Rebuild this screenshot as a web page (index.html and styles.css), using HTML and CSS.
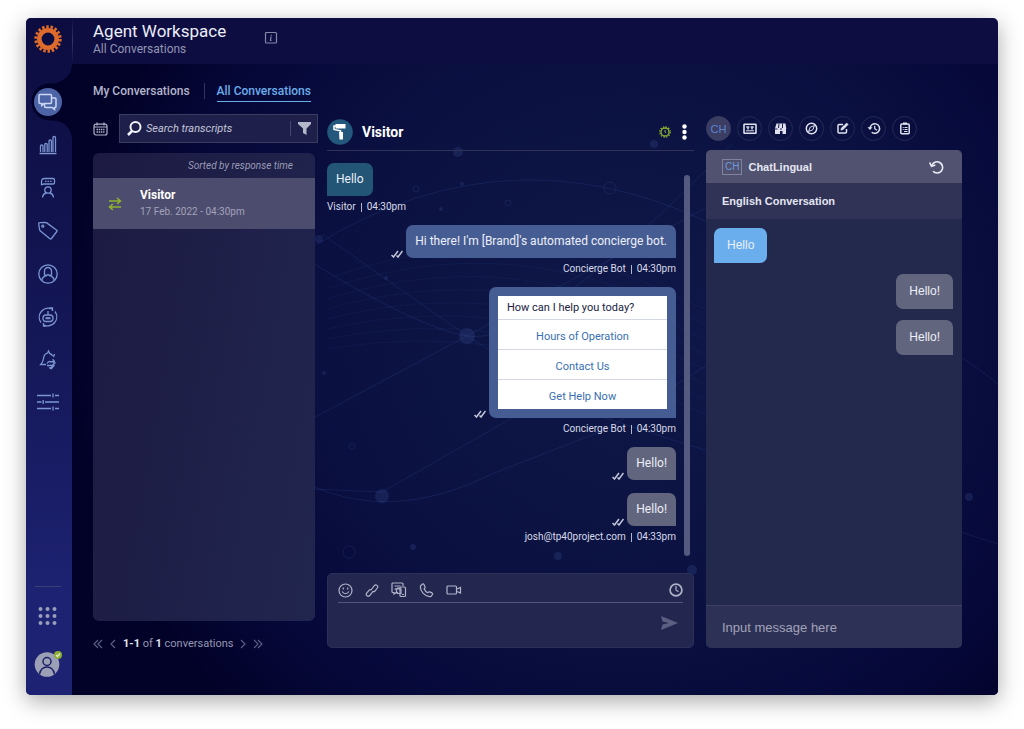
FILE: index.html
```html
<!DOCTYPE html>
<html lang="en">
<head>
<meta charset="utf-8">
<title>Agent Workspace</title>
<link rel="stylesheet" href="styles.css">
</head>
<body>
<div class="app">
  <aside class="sidebar">
    <div class="brand">
      <svg width="28" height="28" viewBox="-14 -14 28 28" fill="none" stroke="#de6b2c"><circle r="8.700" stroke-width="4.600"/><circle r="12.200" stroke-width="3" stroke-dasharray="2.500 1.758"/></svg>
    </div>
    <nav class="nav">
      <svg class="notch" width="46" height="76" viewBox="0 0 46 76"><path d="M46 0C46 11 38 18 27 19.500C14 18 5.500 27 5.500 38C5.500 49 14 57 27 56.500C38 57 46 64 46 76Z" fill="#020229"/></svg>
      <button class="nav-btn active" aria-label="Conversations"><svg width="22" height="20" viewBox="0 0 22 20"><path d="M3 2.500h10.500q1 0 1 1v7q0 1-1 1H7L4.800 13.500v-2H3q-1 0-1-1v-7q0-1 1-1Z"/><path d="M14.500 6H18q1 0 1 1v7.500q0 1-1 1h-.5v2l-2.500-2H9q-1.500 0-1.500-1.500v-2.500"/></svg></button>
      <button class="nav-btn" aria-label="Reports"><svg width="20" height="20" viewBox="0 0 20 20"><path d="M2.500 17v-6q0-1 1.200-1T5 11v6M6.800 17V9.500q0-1 1.200-1t1.200 1V17M11 17V6q0-1 1.200-1t1.200 1v11M15 17V2.500q0-1 1.200-1t1.300 1V17M1.500 18.500h17"/></svg></button>
      <button class="nav-btn" aria-label="Bots and agents"><svg width="20" height="22" viewBox="0 0 20 22"><path d="M6.500 1.500h8.500q1.500 0 1.500 1.500v2.500q0 1.500-1.500 1.500H6L3.500 7.700V4.500q0-3 3-3Z"/><path d="M7 4.300h7" stroke-dasharray="1.500 1"/><circle cx="10" cy="13" r="3.200"/><path d="M4.500 20.500q.5-4 4-4.500M15.500 20.500q-.5-4-4-4.500"/></svg></button>
      <button class="nav-btn" aria-label="Tags"><svg width="22" height="20" viewBox="0 0 22 20"><path d="M3 1.700 8.200 1.400q.8 0 1.500.5L19.500 9q1 .7.300 1.500l-5.300 7q-.7.800-1.600.2L3.400 10q-.6-.5-.8-1.300L1.700 3q-.2-1.200 1.300-1.300Z"/><circle cx="5.800" cy="5.200" r="1"/></svg></button>
      <button class="nav-btn" aria-label="Users"><svg width="22" height="22" viewBox="0 0 22 22"><circle cx="11" cy="11" r="9.200"/><path d="M7.500 12V8a3.500 3.500 0 0 1 7 0v4l-2 .5-1.500-1-1.500 1Z"/><path d="M4.800 17.500q.7-4 4.700-5M17.200 17.500q-.7-4-4.700-5"/></svg></button>
      <button class="nav-btn" aria-label="Automation"><svg width="22" height="22" viewBox="0 0 22 22"><path d="M15 3A9 9 0 0 0 4 16.500M7 19A9 9 0 0 0 18 5.500M12.500 2h3v3M9.500 20h-3v-3M11 5v4"/><rect x="6" y="9" width="10" height="6.500" rx="3"/><path d="M8.500 12.200h5" stroke-width="2"/></svg></button>
      <button class="nav-btn" aria-label="Alerts"><svg width="22" height="22" viewBox="0 0 22 22"><path d="M4.500 15.500H3.700Q6 13 6.500 9.500q.5-4.500 4-5.500l1-2 1.200 2.500q2 .5 3 2.500M16.500 8l1-3M16 10q0 3 1.500 4.500M4.500 15.500h4.500M10 14.500q2-3 4-1.500l4-1M10 16.500h5l3.500-3M12 18.500l1.500 1 2-2.500M14 20l3.500-4"/></svg></button>
      <button class="nav-btn" aria-label="Settings"><svg width="22" height="20" viewBox="0 0 22 20"><path d="M0 2.500h14M18 2.500h4M16 .5v4M0 9h4.500M8 9h14M6.200 7v4M0 15.500h14M18 15.500h4M16 13.500v4"/></svg></button>
    </nav>
    <div class="nav-foot">
      <button class="nav-btn" aria-label="Apps"><svg width="20" height="20" viewBox="0 0 20 20" class="dots"><path d="M2.500 3h.01M9.500 3h.01M16.500 3h.01M2.500 10h.01M9.500 10h.01M16.500 10h.01M2.500 17h.01M9.500 17h.01M16.500 17h.01"/></svg></button>
      <button class="nav-btn" aria-label="Profile"><svg width="28" height="28" viewBox="0 0 28 28" class="profile"><circle cx="13" cy="14.500" r="12.300" fill="#9ba0b6"/><g fill="none" stroke="#1c2068" stroke-width="1.500"><circle cx="13" cy="11.500" r="4"/><path d="M5.500 24q1.500-7 7.500-7t7.500 7"/></g><circle cx="24" cy="5" r="4" fill="#8cae35"/><path d="m22 5 1.500 1.500 2.500-3" fill="none" stroke="#e5eccc" stroke-width="1.200"/></svg></button>
    </div>
  </aside>

  <header class="topbar">
    <div>
      <h1>Agent Workspace</h1>
      <p>All Conversations</p>
    </div>
    <button class="plain" aria-label="Information"><svg width="14" height="14" viewBox="0 0 14 14" fill="none" stroke="#8587a5" stroke-width="1.200"><rect x="1.500" y="1.500" width="11" height="10.500" rx="1"/><path d="M7.300 3.700v1M6.300 6H7L6.500 9.500h1"/></svg></button>
  </header>

  <main class="main">
    <svg class="backdrop" viewBox="0 0 926 631" preserveAspectRatio="xMidYMid slice" aria-hidden="true">
      <g fill="none" stroke="#4a6fc0" stroke-opacity=".15">
        <path d="M215 200Q420 55 640 160T926 320M180 160Q330 260 395 272T660 80M230 360 395 272 660 130M235 420Q320 460 420 410L535 365Q590 330 730 240M395 272 250 170M395 272 520 350 926 480M240 425 310 428 500 320"/>
        <path stroke-opacity=".07" d="M255 215Q430 150 600 230T790 300M255 225Q430 165 600 245T790 315M255 235Q430 180 600 260T790 330M255 245Q430 195 600 275T790 345M255 255Q430 210 600 290T790 360M255 265Q430 225 600 305T790 375M255 275Q430 240 600 320T790 390M255 285Q430 255 600 335T790 405"/>
        <circle cx="277" cy="488" r="6"/><circle cx="538" cy="124" r="6"/><circle cx="344" cy="125" r="3"/><circle cx="436" cy="139" r="3"/><circle cx="280" cy="382" r="3"/>
      </g>
      <g fill="#4c66aa" fill-opacity=".2">
        <circle cx="395" cy="272" r="8"/><circle cx="386" cy="88" r="5"/><circle cx="310" cy="432" r="7"/><circle cx="486" cy="492" r="4"/><circle cx="582" cy="80" r="4"/><circle cx="341" cy="483" r="3"/><circle cx="247" cy="175" r="4"/><circle cx="252" cy="309" r="2"/><circle cx="390" cy="120" r="2"/><circle cx="369" cy="145" r="2"/><circle cx="314" cy="214" r="2"/><circle cx="897" cy="433" r="4"/><circle cx="620" cy="506" r="5"/>
      </g>
    </svg>

    <nav class="tabs">
      <a href="#">My Conversations</a>
      <a href="#" class="current">All Conversations</a>
    </nav>

    <div class="columns">
      <section class="list-col">
        <div class="search-row">
          <button class="plain" aria-label="Calendar"><svg width="15" height="14" viewBox="0 0 15 14" fill="none" stroke="#b0b2c8" stroke-width="1.200"><rect x="1" y="2.200" width="13" height="10.800" rx="2"/><path d="M4 .5v3M11 .5v3M1 5h13"/><path d="M3.500 7.500h8M3.500 10h8" stroke-width="1.500" stroke-dasharray="1.500 .7"/></svg></button>
          <div class="search">
            <svg width="15" height="15" viewBox="0 0 15 15" fill="none" stroke="#f2f4fb" stroke-width="2"><circle cx="8.500" cy="6" r="5"/><path d="m5 10-4 4" stroke-width="2.500"/></svg>
            <input type="text" placeholder="Search transcripts" aria-label="Search transcripts">
            <button class="filter" aria-label="Filter"><svg width="13" height="13" viewBox="0 0 13 13" fill="#b4b6ca"><path d="M0 0h13v2L8.500 6.500V13L5 11V6.500L0 2Z"/></svg></button>
          </div>
        </div>
        <div class="list">
          <p class="sorted">Sorted by response time</p>
          <button class="item">
            <svg width="14" height="14" viewBox="0 0 14 14" fill="none" stroke="#8fb32f" stroke-width="1.500"><path d="M1 4h11M9 1l3.500 3L9 7M13 10H2M5 7l-3.500 3L5 13"/></svg>
            <span><strong>Visitor</strong><small>17 Feb. 2022 - 04:30pm</small></span>
          </button>
        </div>
        <div class="pager">
          <button class="plain" aria-label="First page"><svg width="10" height="10" viewBox="0 0 10 10"><path d="M5 1 1 5l4 4M9 1 5 5l4 4"/></svg></button>
          <button class="plain" aria-label="Previous page"><svg width="6" height="10" viewBox="0 0 6 10"><path d="M5 1 1 5l4 4"/></svg></button>
          <span><b>1-1</b> of <b>1</b> conversations</span>
          <button class="plain" aria-label="Next page"><svg width="6" height="10" viewBox="0 0 6 10"><path d="m1 1 4 4-4 4"/></svg></button>
          <button class="plain" aria-label="Last page"><svg width="10" height="10" viewBox="0 0 10 10"><path d="m1 1 4 4-4 4M5 1l4 4-4 4"/></svg></button>
        </div>
      </section>

      <section class="chat">
        <header class="chat-head">
          <svg width="26" height="26" viewBox="0 0 26 26"><circle cx="13" cy="13" r="12.800" fill="#23587c"/><path d="M8.500 5h10v4.500h-10Z" fill="#fff"/><path d="M9 7H7v3.500l6.500 1.300v2" fill="none" stroke="#fff" stroke-width="1.500"/><path d="M12 13h4v7.500h-3.500Z" fill="#fff"/></svg>
          <h2>Visitor</h2>
          <button class="plain" aria-label="Status"><svg width="12" height="12" viewBox="-6 -6 12 12" fill="none" stroke="#8fb32f"><circle r="4" stroke-width="1.300"/><circle r="5.200" stroke-width="1.300" stroke-dasharray="1.400 1.323"/><path d="M0-2V0l1 1"/></svg></button>
          <button class="plain" aria-label="More"><svg width="5" height="16" viewBox="0 0 5 16" fill="#fff"><circle cx="2.500" cy="2.500" r="2.200"/><circle cx="2.500" cy="8" r="2.200"/><circle cx="2.500" cy="13.500" r="2.200"/></svg></button>
        </header>
        <div class="thread">
          <div class="messages">
            <div class="msg in"><p class="bubble visitor">Hello</p><small>Visitor<i></i>04:30pm</small></div>
            <div class="msg">
              <div class="line"><svg class="ticks" width="12" height="8" viewBox="0 0 12 8"><path d="m.5 5 2 2L7 1M5.500 5.500 7 7l4.500-6"/></svg><p class="bubble bot">Hi there! I'm [Brand]'s automated concierge bot.</p></div>
              <small>Concierge Bot<i></i>04:30pm</small>
            </div>
            <div class="msg">
              <div class="line"><svg class="ticks" width="12" height="8" viewBox="0 0 12 8"><path d="m.5 5 2 2L7 1M5.500 5.500 7 7l4.500-6"/></svg>
                <div class="bubble bot card"><div class="options"><p>How can I help you today?</p><button>Hours of Operation</button><button>Contact Us</button><button>Get Help Now</button></div></div>
              </div>
              <small>Concierge Bot<i></i>04:30pm</small>
            </div>
            <div class="msg">
              <div class="line"><svg class="ticks" width="12" height="8" viewBox="0 0 12 8"><path d="m.5 5 2 2L7 1M5.500 5.500 7 7l4.500-6"/></svg><p class="bubble agent">Hello!</p></div>
              <div class="line next"><svg class="ticks" width="12" height="8" viewBox="0 0 12 8"><path d="m.5 5 2 2L7 1M5.500 5.500 7 7l4.500-6"/></svg><p class="bubble agent">Hello!</p></div>
              <small>josh@tp40project.com<i></i>04:33pm</small>
            </div>
          </div>
          <div class="scrollbar"></div>
        </div>
        <div class="composer">
          <div class="tools">
            <button class="plain" aria-label="Emoji"><svg width="15" height="15" viewBox="0 0 15 15"><circle cx="7.500" cy="7.500" r="6.500"/><path d="M5.300 4.500v2M9.700 4.500v2M4 8.500q3.500 4.500 7 0"/></svg></button>
            <button class="plain" aria-label="Attach link"><svg width="14" height="15" viewBox="0 0 14 15"><path d="M6 7 9.300 2.700q1.300-1.400 2.700-.3t.3 2.600L10 8q-1.200 1.200-2.500.3M8 8.300l-3.300 4.200q-1.300 1.400-2.700.3t-.3-2.600L4 7.300q1.200-1.200 2.500-.3"/></svg></button>
            <button class="plain" aria-label="Templates"><svg width="16" height="16" viewBox="0 0 16 16"><path d="M7 10.500H5l-2 1.500v-1.500H2q-1 0-1-1V2q0-1 1-1h9q1 0 1 1v2M3.500 4h6M3.500 7H6"/><rect x="9" y="5" width="5.500" height="9.500" rx="1"/><path d="M6 6h3M5 7h5v4.500H6ZM11 12.500h2"/></svg></button>
            <button class="plain" aria-label="Call"><svg width="15" height="15" viewBox="0 0 15 15"><path d="M1.500 3 3.500 1q1-.5 1.500.5L6 4q.3 1-.8 1.700.8 2.600 3.600 4 .9-1.200 2-.8l2.200 1q1 .6.500 1.500L12 13.500Q8 14.500 4 10.200.8 6.500 1.500 3Z"/></svg></button>
            <button class="plain" aria-label="Video"><svg width="16" height="12" viewBox="0 0 16 12"><rect x="1" y="2" width="9.500" height="8" rx="1"/><path d="m11 5 3.500-1.500v5.500L11 7.500"/></svg></button>
            <button class="plain clock" aria-label="Schedule"><svg width="14" height="14" viewBox="0 0 14 14"><circle cx="7" cy="7" r="5.900" stroke-width="1.700"/><path d="M7 3v4l2.500 1.800"/></svg></button>
          </div>
          <div class="write">
            <textarea aria-label="Message"></textarea>
            <button class="plain" aria-label="Send"><svg width="17" height="14" viewBox="0 0 17 14" fill="#5d5f82"><path d="M0 0 17 7 0 14 1.500 8.500 8 7 1.500 5.500Z"/></svg></button>
          </div>
        </div>
      </section>

      <section class="side">
        <div class="widgets">
          <button class="on">CH</button>
          <button aria-label="Customer"><svg width="14" height="12" viewBox="0 0 14 12"><rect x="1" y="1.200" width="12" height="9" rx=".5" stroke-width="1.600"/><path d="M3 4h3.500M7.500 4H11M3 7.800h8" stroke-width="1"/><path d="M5 3.500v3M9 3.500v3" stroke-width="1.500"/></svg></button>
          <button aria-label="Store"><svg width="13" height="13" viewBox="0 0 13 13"><path d="M2.500 1.500h9l.8 5.500H12v5H8.500V9H6v3H1V7H.8Z" fill="#dfe2ee" stroke="none"/><path d="M5 1.500 4.500 6M8.500 1.500V6M1 7h2.500M6 7h2" stroke="#181c50" stroke-width="1"/></svg></button>
          <button aria-label="Navigate"><svg width="13" height="13" viewBox="0 0 13 13"><circle cx="6.500" cy="6.500" r="5.200" stroke-width="1.500"/><path d="m3.500 9.500 1.700-4.300 4.300-1.700-1.700 4.300Z" stroke-width="1"/></svg></button>
          <button aria-label="Edit"><svg width="13" height="13" viewBox="0 0 13 13"><path d="M7 2.500H3q-1 0-1 1V10q0 1 1 1h6.500q1 0 1-1V7" stroke-width="1.500"/><path d="m4.800 8.200.5-2.200L10.700 1l1.500 1.500L7 7.700Z" fill="#dfe2ee" stroke-width=".5"/></svg></button>
          <button aria-label="History"><svg width="14" height="13" viewBox="0 0 14 13"><path d="M3 6.500a4.800 4.800 0 1 1 1.700 3.700" stroke-width="1.500"/><path d="M.5 5.200h5L3 8Z" fill="#dfe2ee" stroke="none"/><path d="M7.700 3.700v3L10 8.300"/></svg></button>
          <button aria-label="Notes"><svg width="12" height="13" viewBox="0 0 12 13"><rect x="1.800" y="2" width="8.400" height="9.800" rx="1" stroke-width="1.500"/><path d="M4 1.500h4" stroke-width="2"/><path d="M3.700 5.500h1M5.500 5.500h3M3.700 7.500h1M5.500 7.500h3M5 9.500h3.500"/></svg></button>
        </div>
        <div class="panel">
          <header class="panel-head">
            <span class="tag">CH</span><h2>ChatLingual</h2>
            <button class="plain" aria-label="Refresh"><svg width="16" height="14" viewBox="0 0 16 14" fill="none" stroke="#eceef6" stroke-width="1.600"><path d="M3 5a5.600 5.600 0 1 1 1 6.300"/><path d="M.7 2.500 2.500 6.200 6.300 5"/></svg></button>
          </header>
          <h3>English Conversation</h3>
          <div class="panel-body">
            <p class="bubble blue">Hello</p>
            <p class="bubble agent">Hello!</p>
            <p class="bubble agent">Hello!</p>
          </div>
          <input type="text" class="reply" placeholder="Input message here" aria-label="Input message here">
        </div>
      </section>
    </div>
  </main>
</div>
</body>
</html>
```
FILE: styles.css
```css
* { box-sizing: border-box; }
body {
  margin: 0;
  min-height: 100vh;
  padding: 18px 26px 34px;
  display: flex;
  background: #fff;
  font-family: Roboto, "Liberation Sans", sans-serif;
  font-size: 12px;
  color: #e4e6f2;
}
h1, h2, h3, p { margin: 0; font-weight: 400; }
button, input, textarea { font: inherit; color: inherit; background: none; border: 0; padding: 0; margin: 0; outline: 0; }
svg { display: block; flex: none; }
.plain { display: flex; align-items: center; }

.app {
  flex: 1;
  display: grid;
  grid-template-columns: 46px 1fr;
  grid-template-rows: 46px 1fr;
  border-radius: 5px;
  overflow: hidden;
  background: #0d0d42;
  box-shadow: 0 6px 22px rgba(0, 0, 0, .34);
}

.sidebar {
  grid-row: 1 / 3;
  display: flex;
  flex-direction: column;
  background: linear-gradient(#0c0c40 0, #0e0f46 80px, #151858 50%, #1d2272 85%);
}
.brand { height: 46px; padding: 7px 2px 0 0; display: flex; justify-content: center; }
.nav {
  position: relative;
  flex: 1;
  padding: 24px 2px 0 0;
  display: flex;
  flex-direction: column;
  align-items: center;
  gap: 15px;
}
.notch { position: absolute; top: 0; left: 0; }
.nav-btn {
  position: relative;
  width: 28px;
  height: 28px;
  border-radius: 50%;
  display: flex;
  align-items: center;
  justify-content: center;
}
.nav-btn svg { fill: none; stroke: #7b95d2; stroke-width: 1.3px; }
.nav-btn.active { background: #4c63a5; }
.nav-btn.active svg { stroke: #ccd7f3; stroke-width: 1.5px; }
.nav-btn .dots { stroke: #999eba; stroke-width: 4px; stroke-linecap: round; }
.nav-btn .profile { stroke: none; }
.nav-foot {
  display: flex;
  flex-direction: column;
  align-items: center;
  gap: 20px;
  margin: 0 11px 0 9px;
  padding: 15px 0 17px;
  border-top: 1px solid #3a4074;
}

.topbar { display: flex; align-items: center; gap: 38px; padding: 0 21px; background: linear-gradient(#0d0d42, #34356a, #0d0d42) left / 1px 100% no-repeat; }
.topbar div { padding-bottom: 5px; }
.topbar h1 { font-size: 17px; line-height: 20px; color: #eceef7; }
.topbar p { line-height: 16px; color: #9495b3; }
.topbar .plain { padding-bottom: 6px; }

.main {
  position: relative;
  display: flex;
  flex-direction: column;
  gap: 12px;
  min-width: 0;
  padding: 18px 36px 43px 21px;
  background: radial-gradient(ellipse 60% 85% at 60% 42%, #0f1848 0, #0b1242 50%, #06083a 80%, #020229 100%), #020229;
}
.backdrop { position: absolute; inset: 0; width: 100%; height: 100%; }
.tabs { position: relative; display: flex; height: 20px; font-weight: 500; }
.tabs a { color: #b3b5ca; text-decoration: none; line-height: 18px; }
.tabs .current { margin-left: 27px; color: #6bade9; border-bottom: 1px solid #6bade9; }
.tabs a:first-child::after { content: ""; position: absolute; width: 1px; height: 16px; top: 1px; margin-left: 14px; background: #34355d; }

.columns { position: relative; flex: 1; display: grid; grid-template-columns: 222fr 367fr 256fr; gap: 12px; }
.list-col, .chat, .side { display: flex; flex-direction: column; min-width: 0; }
.chat, .side { margin-bottom: 4px; }

.search-row { display: flex; gap: 11px; height: 29px; margin-right: -3px; }
.search {
  flex: 1;
  min-width: 0;
  display: flex;
  align-items: center;
  gap: 4px;
  padding: 0 6px 0 7px;
  border: 1px solid #3b3c5e;
  background: #1e204b;
}
.search input { flex: 1; min-width: 0; font-size: 11px; font-style: italic; }
.search input::placeholder { color: #c4c6d8; opacity: 1; }
.filter { padding: 1px 0 1px 7px; border-left: 1px solid #45466a; }

.list { flex: 1; margin: 10px 0 15px; border-radius: 6px; overflow: hidden; background: linear-gradient(100deg, #1c1a42, #21264f); }
.sorted { height: 25px; padding-right: 22px; text-align: right; font-size: 10px; line-height: 25px; font-style: italic; color: #9a9bb4; }
.item { display: flex; align-items: center; gap: 18px; width: 100%; height: 51px; padding-left: 15px; text-align: left; background: #4c4c6e; }
.item span { display: flex; flex-direction: column; }
.item strong { line-height: 17px; color: #fff; }
.item small { font-size: 10px; line-height: 16px; color: #a3a3ba; }
.pager { display: flex; align-items: center; gap: 7px; line-height: 16px; font-size: 11px; color: #9597b2; }
.pager svg { fill: none; stroke: #5b5c82; stroke-width: 1.2px; }
.pager b { color: #e3e5ef; }

.chat-head { display: flex; align-items: center; height: 37px; gap: 9px; border-bottom: 1px solid #303258; }
.chat-head h2 { flex: 1; font-size: 14px; font-weight: 700; color: #fff; }
.chat-head .plain:last-child { margin: 0 7px 0 2px; }
.thread { flex: 1; display: flex; gap: 8px; }
.messages { flex: 1; display: flex; flex-direction: column; gap: 11px; padding-top: 12px; }
.scrollbar { width: 6px; margin: 24px 4px 17px 0; border-radius: 3px; background: #555a80; }
.msg { display: flex; flex-direction: column; align-items: flex-end; }
.msg.in { align-items: flex-start; }
.msg small { display: flex; align-items: center; margin-top: 4px; font-size: 10px; line-height: 14px; color: #d8dae8; }
.msg small i { width: 1px; height: 9px; margin: 0 5px; background: #b4b7cc; }
.line { display: flex; align-items: flex-end; gap: 3px; }
.line.next { margin-top: 13px; }
.ticks { fill: none; stroke: #c6c9dc; stroke-width: 1.5px; }
.bubble { padding: 0 9px; border-radius: 7px 7px 0 7px; line-height: 33px; color: #edf0f8; }
.bubble.visitor { border-radius: 7px 7px 7px 0; background: #225576; }
.bubble.bot { background: #465d94; }
.bubble.agent { background: #62657e; }
.bubble.card { padding: 9px; }
.options { display: flex; flex-direction: column; width: 169px; background: #fff; }
.options p { padding-left: 9px; font-size: 11px; line-height: 23px; color: #20213f; }
.options button { height: 30px; padding-bottom: 2px; border-top: 1px solid #d4d8e4; font-size: 11px; color: #3970b3; }

.composer { display: flex; flex-direction: column; height: 75px; padding: 4px 10px; border: 1px solid #2c3058; border-radius: 5px; background: #23264f; }
.tools { display: flex; align-items: center; gap: 12px; height: 25px; border-bottom: 1px solid #54567a; }
.tools svg, .widgets svg { fill: none; stroke: #b0b2c8; stroke-width: 1.2px; }
.clock { margin-left: auto; }
.write { flex: 1; display: flex; align-items: center; padding-right: 5px; }
.write textarea { flex: 1; min-width: 0; height: 30px; resize: none; }

.side { font-family: "Liberation Sans", Arial, sans-serif; }
.widgets { display: flex; gap: 6px; margin: 2px 0 9px; }
.widgets button { width: 25px; height: 25px; display: flex; align-items: center; justify-content: center; border: 1px solid #242954; border-radius: 50%; font-size: 11px; color: #5c84d2; }
.widgets .on { border-color: #3b3d62; background: #3b3d62; }
.widgets svg { stroke: #dfe2ee; }
.panel { flex: 1; display: flex; flex-direction: column; border-radius: 5px; overflow: hidden; background: #23284d; }
.panel-head { display: flex; align-items: center; gap: 6px; height: 33px; padding: 0 17px 0 16px; background: #51526f; }
.panel-head h2 { flex: 1; font-size: 11px; font-weight: 700; }
.tag { border: 1px solid #7f839e; padding: 0 2px; font-size: 10px; line-height: 14px; color: #6f99dd; }
.panel h3 { padding-left: 16px; font-size: 11px; font-weight: 700; line-height: 36px; background: #303256; }
.panel-body { flex: 1; display: flex; flex-direction: column; gap: 11px; padding: 9px 9px 9px 8px; align-items: flex-end; }
.panel-body .bubble { padding: 0 13px; line-height: 35px; }
.panel-body .blue { align-self: flex-start; background: #6aaeed; border-radius: 7px 7px 7px 0; }
.reply { height: 43px; padding: 0 16px; border-top: 1px solid #3d3f63; background: #2e3156; font-size: 13px; }
.reply::placeholder { color: #a1a3b9; opacity: 1; }
```
